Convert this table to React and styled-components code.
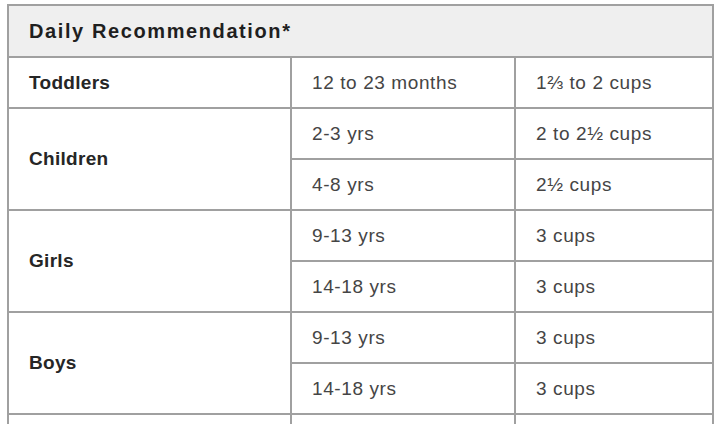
import styled, { createGlobalStyle } from "styled-components";

const GlobalStyle = createGlobalStyle`
  html, body {
    margin: 0;
    padding: 0;
    background: #ffffff;
  }
  body {
    font-family: "Liberation Sans", Arial, sans-serif;
  }
`;

const Page = styled.div`
  width: 720px;
  height: 424px;
  overflow: hidden;
  padding: 4px 0 0 7px;
  box-sizing: border-box;
`;

const Table = styled.table`
  width: 705px;
  border-collapse: collapse;
  table-layout: fixed;
`;

const Row = styled.tr`
  height: ${(p) => p.h || 51}px;
`;

const HeadCell = styled.th`
  background: #efefef;
  border: 2px solid #a0a0a0;
  text-align: left;
  padding: 0 20px;
  font-size: 20px;
  font-weight: bold;
  letter-spacing: 1.6px;
  color: #1f1f1f;
`;

const Cell = styled.td`
  border: 2px solid #a0a0a0;
  padding: 0 20px;
  font-size: 19px;
  letter-spacing: ${(p) => (p.bold ? "0.3px" : "0.6px")};
  font-weight: ${(p) => (p.bold ? "bold" : "normal")};
  color: ${(p) => (p.bold ? "#262626" : "#454545")};
  vertical-align: middle;
  white-space: nowrap;
`;

const rows = [
  { label: "Toddlers", items: [["12 to 23 months", "1⅔ to 2 cups"]] },
  {
    label: "Children",
    items: [
      ["2-3 yrs", "2 to 2½ cups"],
      ["4-8 yrs", "2½ cups"],
    ],
  },
  {
    label: "Girls",
    items: [
      ["9-13 yrs", "3 cups"],
      ["14-18 yrs", "3 cups"],
    ],
  },
  {
    label: "Boys",
    items: [
      ["9-13 yrs", "3 cups"],
      ["14-18 yrs", "3 cups"],
    ],
  },
];

export default function App() {
  return (
    <Page>
      <GlobalStyle />
      <Table>
        <colgroup>
          <col style={{ width: 283 }} />
          <col style={{ width: 224 }} />
          <col style={{ width: 198 }} />
        </colgroup>
        <thead>
          <Row h={52}>
            <HeadCell colSpan={3}>Daily Recommendation*</HeadCell>
          </Row>
        </thead>
        <tbody>
          {rows.map((group) =>
            group.items.map((item, i) => (
              <Row key={group.label + i}>
                {i === 0 && (
                  <Cell bold rowSpan={group.items.length}>
                    {group.label}
                  </Cell>
                )}
                <Cell>{item[0]}</Cell>
                <Cell>{item[1]}</Cell>
              </Row>
            ))
          )}
          <Row>
            <Cell bold></Cell>
            <Cell></Cell>
            <Cell></Cell>
          </Row>
        </tbody>
      </Table>
    </Page>
  );
}
